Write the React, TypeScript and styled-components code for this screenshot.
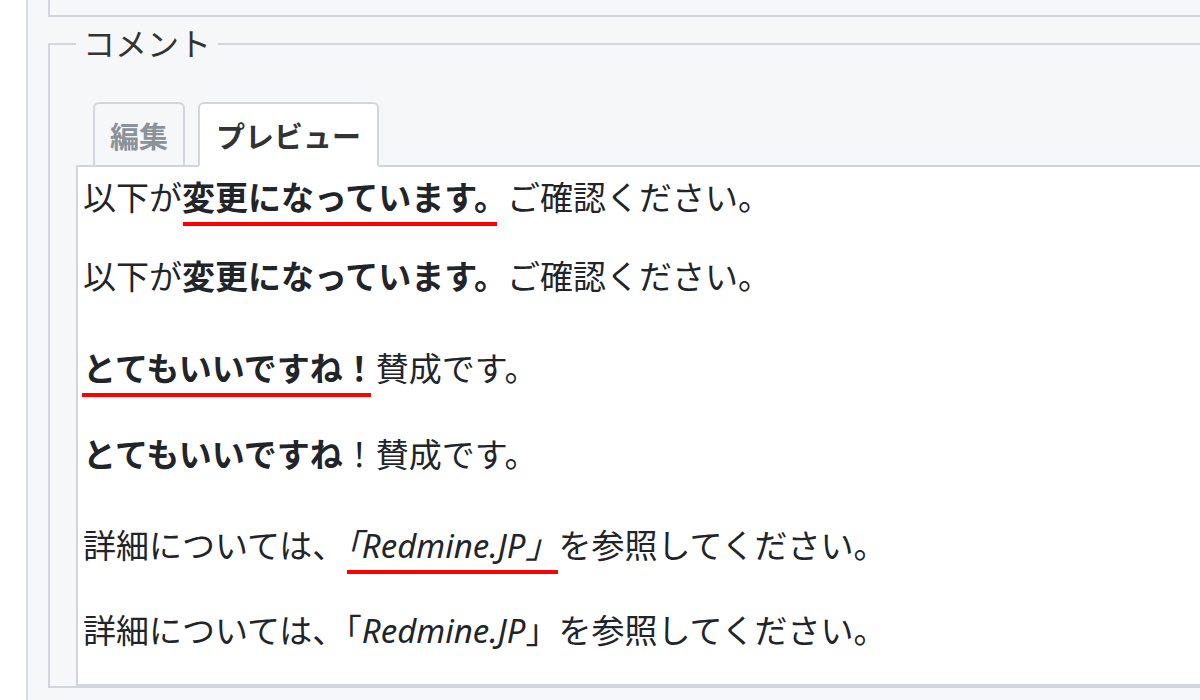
import styled, { createGlobalStyle } from "styled-components";

const GlobalStyle = createGlobalStyle`
  html, body {
    margin: 0;
    padding: 0;
    background: #fff;
    overflow: hidden;
  }
  body {
    font-family: "Noto Sans", "Noto Sans CJK JP", sans-serif;
    color: #212529;
  }
`;

const Page = styled.div`
  display: flex;
  width: 1200px;
  height: 700px;
  overflow: hidden;
`;

const Gutter = styled.div`
  width: 26px;
  flex-shrink: 0;
  background: #fff;
`;

const Main = styled.div`
  flex: 1;
  min-width: 0;
  background: #f6f7f9;
  border-left: 2px solid #d8dce1;
  padding-left: 20px;
  overflow: hidden;
`;

const UpperBox = styled.div`
  height: 15px;
  margin-right: -40px;
  border-left: 2px solid #d1d6dc;
  border-bottom: 2px solid #d1d6dc;
`;

const CommentFieldset = styled.fieldset`
  margin: 11px -40px 0 0;
  padding: 42px 0 0 26px;
  border: 2px solid #d1d6dc;
  min-width: 0;
`;

const Legend = styled.legend`
  padding: 0 7px;
  font-size: 32px;
  line-height: 32px;
  color: #333;
`;

const TabBar = styled.div`
  display: flex;
  gap: 13px;
  padding-left: 17px;
  margin-bottom: -2px;
  position: relative;
  z-index: 1;
`;

const Tab = styled.div<{ $active?: boolean }>`
  height: 61px;
  display: flex;
  align-items: center;
  padding: 0 ${(p) => (p.$active ? 16 : 15)}px;
  font-size: 29px;
  font-weight: 700;
  border: 2px solid #d1d6dc;
  border-radius: 6px 6px 0 0;
  background: ${(p) => (p.$active ? "#fff" : "#f6f7f9")};
  border-bottom-color: ${(p) => (p.$active ? "#fff" : "#d1d6dc")};
  color: ${(p) => (p.$active ? "#333" : "#8b9299")};
`;

const Preview = styled.div`
  background: #fff;
  border: 2px solid #d1d6dc;
  padding: 11px 6px 33px 5px;
`;

const Para = styled.p<{ $gap: number }>`
  margin: ${(p) => p.$gap}px 0 0;
  font-size: 33px;
  line-height: 40px;
  white-space: nowrap;
`;

const Strong = styled.strong`
  font-weight: 700;
`;

const Em = styled.em`
  font-style: italic;
`;

// red annotation line drawn under a phrase
const Marked = styled.span<{ $l: number; $r: number }>`
  position: relative;
  &::after {
    content: "";
    position: absolute;
    left: ${(p) => p.$l}px;
    right: ${(p) => p.$r}px;
    top: calc(50% + 24px);
    height: 4px;
    background: #f00;
  }
`;

export default function App() {
  return (
    <>
      <GlobalStyle />
      <Page>
        <Gutter />
        <Main>
          <UpperBox />
          <CommentFieldset>
            <Legend>コメント</Legend>
            <TabBar>
              <Tab>編集</Tab>
              <Tab $active>プレビュー</Tab>
            </TabBar>
            <Preview>
              <Para $gap={0}>
                以下が
                <Marked $l={1} $r={10}>
                  <Strong>変更になっています。</Strong>
                </Marked>
                ご確認ください。
              </Para>
              <Para $gap={39}>
                以下が<Strong>変更になっています。</Strong>ご確認ください。
              </Para>
              <Para $gap={52}>
                <Marked $l={-1} $r={5}>
                  <Strong>とてもいいですね！</Strong>
                </Marked>
                賛成です。
              </Para>
              <Para $gap={46}>
                <Strong>とてもいいですね</Strong>！賛成です。
              </Para>
              <Para $gap={51}>
                詳細については、
                <Marked $l={2} $r={0}>
                  <Em>「Redmine.JP」</Em>
                </Marked>
                を参照してください。
              </Para>
              <Para $gap={45}>
                詳細については、「<Em>Redmine.JP</Em>」を参照してください。
              </Para>
            </Preview>
          </CommentFieldset>
        </Main>
      </Page>
    </>
  );
}
